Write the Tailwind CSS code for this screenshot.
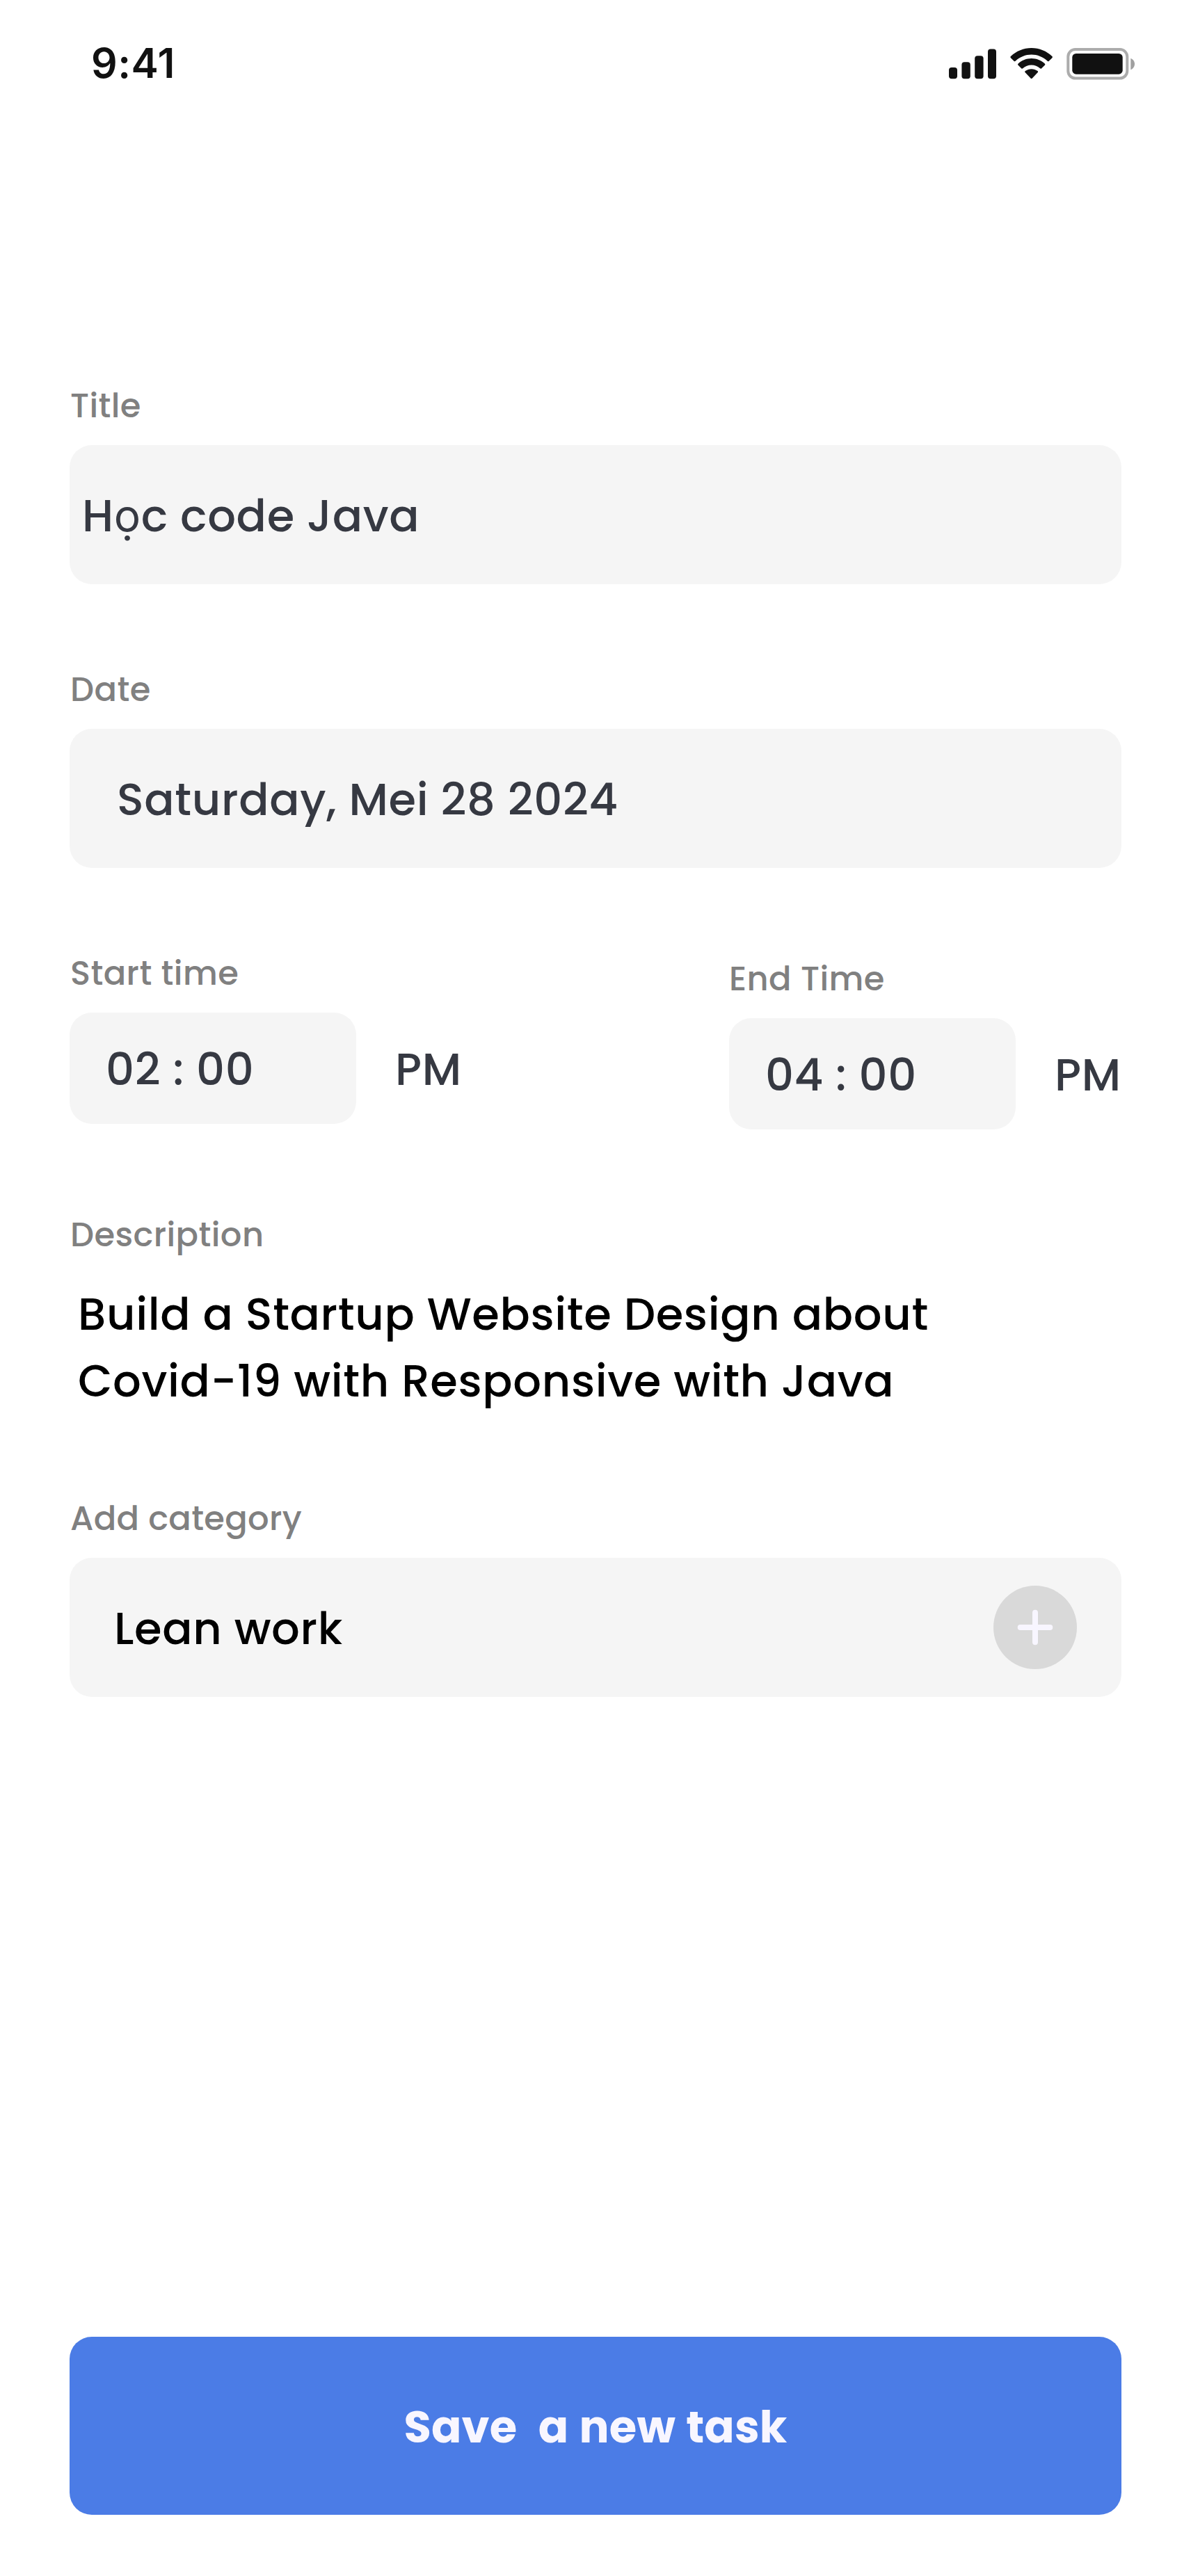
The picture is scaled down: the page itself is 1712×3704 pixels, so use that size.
<!DOCTYPE html>
<html lang="vi">
<head>
<meta charset="utf-8">
<title>New task</title>
<script src="https://cdn.jsdelivr.net/npm/@tailwindcss/browser@4"></script>
</head>
<body class="bg-white">
<div class="flex h-[3704px] w-[1712px] flex-col overflow-hidden bg-white font-[Poppins,Inter,sans-serif] text-[64px] leading-[96px] font-medium tracking-[0.01em] text-[#363942]">

  <!-- Status bar -->
  <header class="flex h-[548px] shrink-0 items-start justify-between pl-[131px] pr-[81px]">
    <div class="pt-[55px] font-['Inter'] text-[59px] leading-[72px] font-semibold tracking-[0.5px] text-[#111111]">9:41</div>
    <div class="flex pt-[69px] text-[#111111]">
      <svg class="h-[46px] w-[68px]" viewBox="0 0 68 46" fill="currentColor">
        <rect x="0" y="28" width="12" height="16.3" rx="4"/>
        <rect x="18.4" y="20.2" width="12.4" height="24.1" rx="4"/>
        <rect x="37.2" y="11.2" width="12.4" height="33.1" rx="4"/>
        <rect x="56" y="1.5" width="12" height="42.8" rx="4"/>
      </svg>
      <svg class="ml-5 h-[46px] w-[61px]" viewBox="0 0 61 46" fill="currentColor">
        <path d="M30.7 0C42 0 52.5 4.4 60.4 11.9C61.1 12.6 61.1 13.5 60.4 14.2L55.8 18.7C55.1 19.4 54.3 19.4 53.6 18.8C47.3 12.9 39.2 9.6 30.7 9.6C22.1 9.6 14 12.9 7.7 18.8C7 19.4 6.2 19.4 5.5 18.7L.9 14.2C.2 13.5 .2 12.6 .9 11.9C8.9 4.4 19.4 0 30.7 0Z"/>
        <path d="M30.7 14.9C37.9 14.9 44.6 17.6 49.8 22.5C50.5 23.2 50.5 24 49.8 24.7L45.2 29.2C44.5 29.9 43.7 29.9 43 29.3C39.6 26.2 35.3 24.5 30.7 24.5C26.1 24.5 21.7 26.2 18.3 29.3C17.6 29.9 16.8 29.9 16.1 29.2L11.6 24.7C10.9 24 10.9 23.2 11.6 22.5C16.7 17.6 23.5 14.9 30.7 14.9Z"/>
        <path d="M30.7 30.2C33.9 30.2 37 31.2 39.5 33.1C40.3 33.8 40.3 34.6 39.6 35.3L31.8 43.4C31.1 44.1 30.2 44.1 29.5 43.4L21.7 35.3C21 34.6 21 33.8 21.8 33.1C24.4 31.2 27.4 30.2 30.7 30.2Z"/>
      </svg>
      <svg class="ml-5 h-[46px] w-[98px]" viewBox="0 0 98 46">
        <rect x="2.3" y="2" width="85" height="41.6" rx="10.5" fill="none" stroke="#acacac" stroke-width="4"/>
        <rect x="8.3" y="8" width="72.4" height="29.7" rx="5.5" fill="#111111"/>
        <path d="M92.3 14.7C95.800 16.200 98 19.300 98 23S95.800 29.800 92.300 31.300Z" fill="#a0a0a0"/>
      </svg>
    </div>
  </header>

  <!-- Form -->
  <main class="flex flex-col px-[100px]">
    <label class="pl-px text-[48px] leading-[72px] tracking-[0.4px] text-[#808080]">Title</label>
    <div class="mt-5 h-[200px] rounded-[32px] bg-[#f5f5f5] pt-[54px] pl-[18px]">H<span class="font-['Inter'] leading-none font-normal">ọ</span>c code Java</div>

    <label class="mt-[116px] pl-px text-[48px] leading-[72px] tracking-[0.4px] text-[#808080]">Date</label>
    <div class="mt-5 h-[200px] rounded-[32px] bg-[#f5f5f5] pt-[54px] pl-[68px]">Saturday, Mei 28 2024</div>

    <div class="mt-[116px] flex h-[260px] justify-between">
      <div>
        <div class="pl-px text-[48px] leading-[72px] tracking-[0.4px] text-[#808080]">Start time</div>
        <div class="mt-5 flex">
          <div class="h-40 w-[412px] rounded-[32px] bg-[#f5f5f5] pt-[34px] pl-[52px]">02 : 00</div>
          <div class="pt-[34px] pl-14">PM</div>
        </div>
      </div>
      <div class="w-[564px] pt-2">
        <div class="text-[48px] leading-[72px] tracking-[0.4px] text-[#808080]">End Time</div>
        <div class="mt-5 flex">
          <div class="h-40 w-[412px] rounded-[32px] bg-[#f5f5f5] pt-[34px] pl-[52px]">04 : 00</div>
          <div class="pt-[34px] pl-14">PM</div>
        </div>
      </div>
    </div>

    <label class="mt-[116px] pl-px text-[48px] leading-[72px] tracking-[0.4px] text-[#808080]">Description</label>
    <p class="mt-[30px] pl-3 text-black">Build a Startup Website Design about<br>Covid-19 with Responsive with Java</p>

    <label class="mt-[114px] pl-px text-[48px] leading-[72px] tracking-[0.3px] text-[#808080]">Add category</label>
    <div class="mt-5 flex h-[200px] items-center justify-between rounded-[32px] bg-[#f5f5f5] pr-16 pl-16 text-black">
      <span class="pt-1">Lean work</span>
      <svg class="size-[120px]" viewBox="0 0 120 120">
        <circle cx="60" cy="60" r="60" fill="#d9d9d9"/>
        <path d="M60 38.7V81.3M38.7 60H81.3" stroke="#f8f6ff" stroke-width="8" stroke-linecap="round"/>
      </svg>
    </div>
  </main>

  <footer class="mt-auto px-[100px] pb-[88px]">
    <button class="block h-64 w-full rounded-[32px] bg-[#4b7ce6] pt-1 font-bold tracking-[0.16px] whitespace-pre text-[#f8f6ff] [word-spacing:1.45px]">Save  a new task</button>
  </footer>
</div>
</body>
</html>
